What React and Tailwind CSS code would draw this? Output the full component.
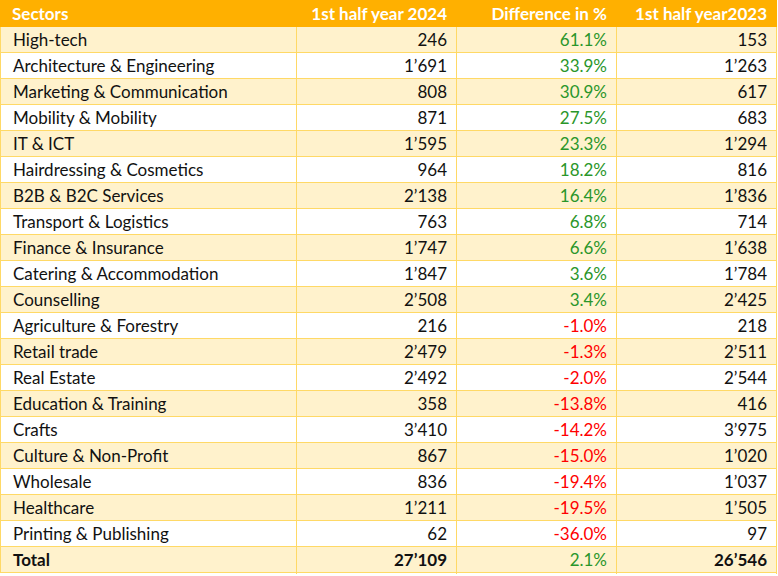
import React from "react";

const rows = [
  ["High-tech", "246", "61.1%", "153"],
  ["Architecture & Engineering", "1’691", "33.9%", "1’263"],
  ["Marketing & Communication", "808", "30.9%", "617"],
  ["Mobility & Mobility", "871", "27.5%", "683"],
  ["IT & ICT", "1’595", "23.3%", "1’294"],
  ["Hairdressing & Cosmetics", "964", "18.2%", "816"],
  ["B2B & B2C Services", "2’138", "16.4%", "1’836"],
  ["Transport & Logistics", "763", "6.8%", "714"],
  ["Finance & Insurance", "1’747", "6.6%", "1’638"],
  ["Catering & Accommodation", "1’847", "3.6%", "1’784"],
  ["Counselling", "2’508", "3.4%", "2’425"],
  ["Agriculture & Forestry", "216", "-1.0%", "218"],
  ["Retail trade", "2’479", "-1.3%", "2’511"],
  ["Real Estate", "2’492", "-2.0%", "2’544"],
  ["Education & Training", "358", "-13.8%", "416"],
  ["Crafts", "3’410", "-14.2%", "3’975"],
  ["Culture & Non-Profit", "867", "-15.0%", "1’020"],
  ["Wholesale", "836", "-19.4%", "1’037"],
  ["Healthcare", "1’211", "-19.5%", "1’505"],
  ["Printing & Publishing", "62", "-36.0%", "97"],
];

function Row({ r, i, total }) {
  const shaded = i % 2 === 0;
  const neg = r[2].startsWith("-");
  return (
    <div
      className={`grid grid-cols-[296px_160px_160px_160px] h-[26px] border-b border-l border-[#FFD966] ${
        shaded ? "bg-[#FFF2CC]" : "bg-white"
      } ${total ? "font-bold" : ""}`}
    >
      <div className="flex items-center pl-[12px] pb-[1px] border-r border-[#FFD966] text-[#111] whitespace-nowrap">
        {r[0]}
      </div>
      <div className="flex items-center justify-end pr-[9px] pb-[1px] border-r border-[#FFD966] text-[#111]">
        {r[1]}
      </div>
      <div
        className={`flex items-center justify-end pr-[9px] pb-[1px] border-r border-[#FFD966] font-normal ${
          neg ? "text-[#FF0000]" : "text-[#2A962A]"
        }`}
      >
        {r[2]}
      </div>
      <div className="flex items-center justify-end pr-[9px] pb-[1px] border-r border-[#FFD966] text-[#111]">
        {r[3]}
      </div>
    </div>
  );
}

export default function App() {
  return (
    <div
      className="w-[778px] h-[576px] bg-white text-[17px]"
      style={{ fontFamily: "Lato, 'Open Sans', sans-serif" }}
    >
      <div className="w-[777px]">
        <div className="grid grid-cols-[296px_160px_160px_161px] h-[27px] bg-[#FFB000] text-white font-bold">
          <div className="flex items-center pl-[12px]">Sectors</div>
          <div className="flex items-center justify-end pr-[9px]">1st half year 2024</div>
          <div className="flex items-center justify-end pr-[9px]">Difference in %</div>
          <div className="flex items-center justify-end pr-[10px]">1st half year2023</div>
        </div>
        {rows.map((r, i) => (
          <Row key={i} r={r} i={i} />
        ))}
        <Row r={["Total", "27’109", "2.1%", "26’546"]} i={20} total />
      </div>
    </div>
  );
}
